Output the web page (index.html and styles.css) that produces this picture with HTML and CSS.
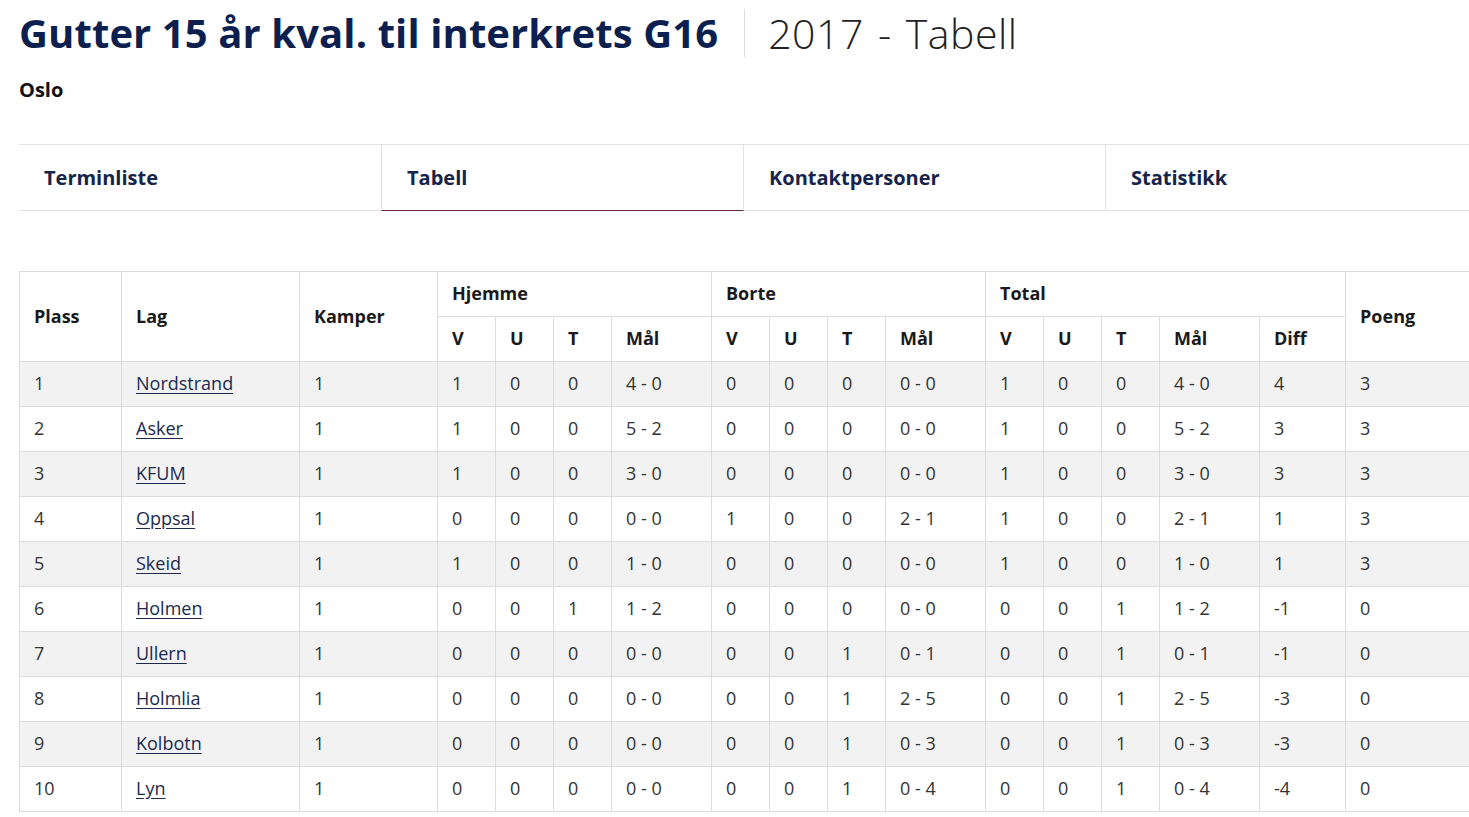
FILE: index.html
```html
<!DOCTYPE html>
<html lang="no">
<head>
<meta charset="utf-8">
<title>Tabell</title>
<link rel="stylesheet" href="styles.css">
</head>
<body>
<div class="page">
  <header class="head">
    <h1 class="title">Gutter 15 år kval. til interkrets G16</h1>
    <span class="sep"></span>
    <span class="sub">2017 - Tabell</span>
  </header>
  <div class="region">Oslo</div>
  <nav class="tabs">
    <a class="tab">Terminliste</a>
    <a class="tab active">Tabell</a>
    <a class="tab">Kontaktpersoner</a>
    <a class="tab">Statistikk</a>
  </nav>
  <table class="standings">
    <colgroup>
      <col class="c-plass"><col class="c-lag"><col class="c-kamper">
      <col class="c-n"><col class="c-n"><col class="c-n"><col class="c-mal">
      <col class="c-n"><col class="c-n"><col class="c-n"><col class="c-mal">
      <col class="c-n"><col class="c-n"><col class="c-n"><col class="c-mal"><col class="c-diff">
      <col class="c-poeng">
    </colgroup>
    <thead>
      <tr>
        <th rowspan="2">Plass</th>
        <th rowspan="2">Lag</th>
        <th rowspan="2">Kamper</th>
        <th colspan="4">Hjemme</th>
        <th colspan="4">Borte</th>
        <th colspan="5">Total</th>
        <th rowspan="2">Poeng</th>
      </tr>
      <tr>
        <th>V</th><th>U</th><th>T</th><th>Mål</th>
        <th>V</th><th>U</th><th>T</th><th>Mål</th>
        <th>V</th><th>U</th><th>T</th><th>Mål</th><th>Diff</th>
      </tr>
    </thead>
    <tbody>
      <tr><td>1</td><td><a href="#">Nordstrand</a></td><td>1</td><td>1</td><td>0</td><td>0</td><td>4 - 0</td><td>0</td><td>0</td><td>0</td><td>0 - 0</td><td>1</td><td>0</td><td>0</td><td>4 - 0</td><td>4</td><td>3</td></tr>
      <tr><td>2</td><td><a href="#">Asker</a></td><td>1</td><td>1</td><td>0</td><td>0</td><td>5 - 2</td><td>0</td><td>0</td><td>0</td><td>0 - 0</td><td>1</td><td>0</td><td>0</td><td>5 - 2</td><td>3</td><td>3</td></tr>
      <tr><td>3</td><td><a href="#">KFUM</a></td><td>1</td><td>1</td><td>0</td><td>0</td><td>3 - 0</td><td>0</td><td>0</td><td>0</td><td>0 - 0</td><td>1</td><td>0</td><td>0</td><td>3 - 0</td><td>3</td><td>3</td></tr>
      <tr><td>4</td><td><a href="#">Oppsal</a></td><td>1</td><td>0</td><td>0</td><td>0</td><td>0 - 0</td><td>1</td><td>0</td><td>0</td><td>2 - 1</td><td>1</td><td>0</td><td>0</td><td>2 - 1</td><td>1</td><td>3</td></tr>
      <tr><td>5</td><td><a href="#">Skeid</a></td><td>1</td><td>1</td><td>0</td><td>0</td><td>1 - 0</td><td>0</td><td>0</td><td>0</td><td>0 - 0</td><td>1</td><td>0</td><td>0</td><td>1 - 0</td><td>1</td><td>3</td></tr>
      <tr><td>6</td><td><a href="#">Holmen</a></td><td>1</td><td>0</td><td>0</td><td>1</td><td>1 - 2</td><td>0</td><td>0</td><td>0</td><td>0 - 0</td><td>0</td><td>0</td><td>1</td><td>1 - 2</td><td>-1</td><td>0</td></tr>
      <tr><td>7</td><td><a href="#">Ullern</a></td><td>1</td><td>0</td><td>0</td><td>0</td><td>0 - 0</td><td>0</td><td>0</td><td>1</td><td>0 - 1</td><td>0</td><td>0</td><td>1</td><td>0 - 1</td><td>-1</td><td>0</td></tr>
      <tr><td>8</td><td><a href="#">Holmlia</a></td><td>1</td><td>0</td><td>0</td><td>0</td><td>0 - 0</td><td>0</td><td>0</td><td>1</td><td>2 - 5</td><td>0</td><td>0</td><td>1</td><td>2 - 5</td><td>-3</td><td>0</td></tr>
      <tr><td>9</td><td><a href="#">Kolbotn</a></td><td>1</td><td>0</td><td>0</td><td>0</td><td>0 - 0</td><td>0</td><td>0</td><td>1</td><td>0 - 3</td><td>0</td><td>0</td><td>1</td><td>0 - 3</td><td>-3</td><td>0</td></tr>
      <tr><td>10</td><td><a href="#">Lyn</a></td><td>1</td><td>0</td><td>0</td><td>0</td><td>0 - 0</td><td>0</td><td>0</td><td>1</td><td>0 - 4</td><td>0</td><td>0</td><td>1</td><td>0 - 4</td><td>-4</td><td>0</td></tr>
    </tbody>
  </table>
</div>
</body>
</html>
```

FILE: styles.css
```css
html, body {
  margin: 0;
  padding: 0;
  background: #fff;
}
body {
  font-family: "Open Sans", "Liberation Sans", sans-serif;
  color: #222;
  overflow: hidden;
}
.page {
  margin-left: 19px;
  width: 1450px;
}
.head {
  display: flex;
  align-items: center;
  height: 66px;
}
.title {
  margin: 0;
  font-size: 40px;
  font-weight: 700;
  color: #0c1f4e;
  line-height: 1;
  letter-spacing: 0.1px;
}
.sep {
  width: 1px;
  height: 48px;
  background: #ddd;
  margin: 0 23px 0 26px;
}
.sub {
  font-size: 41px;
  font-weight: 300;
  color: #222;
  line-height: 1;
  letter-spacing: 0.5px;
  word-spacing: 3px;
}
.region {
  font-size: 20px;
  font-weight: 700;
  color: #111;
  margin-top: 10px;
  line-height: 28px;
}
.tabs {
  display: flex;
  margin-top: 40px;
  border-top: 1px solid #e2e2e2;
  border-bottom: 1px solid #e2e2e2;
  height: 65px;
}
.tab {
  box-sizing: border-box;
  width: 362px;
  flex: none;
  display: flex;
  align-items: center;
  padding-left: 25px;
  font-size: 20px;
  font-weight: 700;
  color: #14244a;
  border-left: 1px solid #e2e2e2;
}
.tab:first-child {
  border-left: none;
}
.tab:last-child {
  flex: 1;
}
.tab.active {
  border-bottom: 1px solid #6b2a3c;
  margin-bottom: -1px;
  margin-right: -1px;
  border-right: 1px solid #e2e2e2;
  width: 363px;
}
.tab.active + .tab {
  border-left: none;
  padding-left: 26px;
  width: 362px;
}
.standings {
  margin-top: 60px;
  width: 1450px;
  border-collapse: collapse;
  table-layout: fixed;
  font-size: 18px;
}
.c-plass { width: 102px; }
.c-lag { width: 178px; }
.c-kamper { width: 138px; }
.c-n { width: 58px; }
.c-mal { width: 100px; }
.c-diff { width: 86px; }
.c-poeng { width: 124px; }
.standings th,
.standings td {
  border: 1px solid #dcdcdc;
  text-align: left;
  padding: 0 0 2px 14px;
  height: 42px;
  white-space: nowrap;
}
.standings th {
  font-weight: 700;
  color: #1a1a1a;
}
.standings td {
  font-weight: 400;
  color: #333;
}
.standings tbody tr:nth-child(odd) td {
  background: #f2f2f2;
}
.standings a {
  color: #1c2a50;
  text-decoration: underline;
  text-underline-offset: 3px;
}
```
